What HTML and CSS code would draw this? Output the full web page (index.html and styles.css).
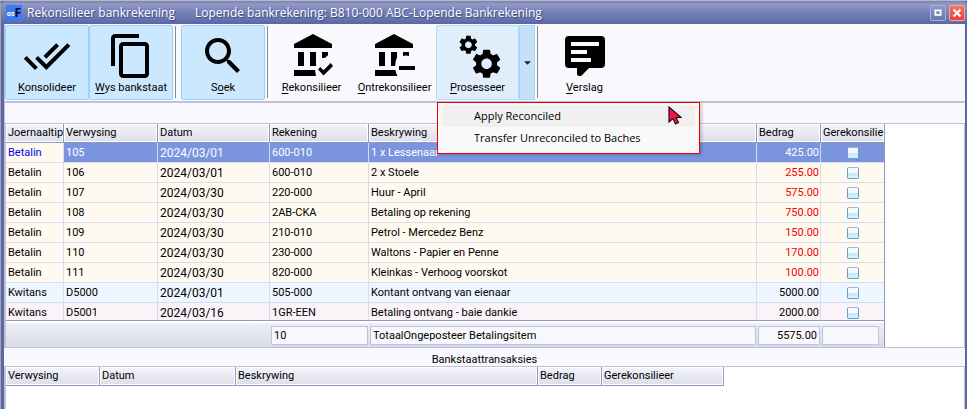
FILE: index.html
```html
<!DOCTYPE html>
<html lang="af">
<head>
<meta charset="utf-8">
<title>Rekonsilieer bankrekening</title>
<link rel="stylesheet" href="styles.css">
</head>
<body>
<main class="window">
  <header class="titlebar">
    <span class="logo"><span class="logo-os">os</span>F</span>
    <h1 class="title">Rekonsilieer bankrekening</h1>
    <span class="subtitle">Lopende bankrekening: B810-000 ABC-Lopende Bankrekening</span>
    <button class="winbtn" type="button" aria-label="Maksimeer"><svg viewBox="0 0 16 16"><path d="M5 5h6v5H5z" fill="none" stroke="#fff" stroke-width="2"/></svg></button>
    <button class="winbtn winbtn-close" type="button" aria-label="Sluit"><svg viewBox="0 0 16 16"><path d="M4 4l8 8M12 4l-8 8" stroke="#fff" stroke-width="2.6"/></svg></button>
  </header>

  <nav class="toolbar">
    <button class="tool tool-on" type="button">
      <svg viewBox="0 0 24 24"><path d="M18 7l-1.41-1.41-6.34 6.34 1.41 1.41L18 7zm4.24-1.41L11.66 16.17 7.48 12l-1.41 1.41L11.66 19l12-12-1.42-1.41zM.41 13.41L6 19l1.41-1.41L1.83 12 .41 13.41z"/></svg>
      <span><u>K</u>onsolideer</span>
    </button>
    <button class="tool tool-on" type="button">
      <svg viewBox="0 0 24 24"><path d="M16 1H4c-1.100 0-2 .9-2 2v14h2V3h12V1zm3 4H8c-1.100 0-2 .9-2 2v14c0 1.100.9 2 2 2h11c1.100 0 2-.9 2-2V7c0-1.100-.9-2-2-2zm0 16H8V7h11v14z"/></svg>
      <span><u>W</u>ys bankstaat</span>
    </button>
    <span class="sep"></span>
    <button class="tool tool-on" type="button">
      <svg viewBox="0 0 24 24"><path d="M15.500 14h-.79l-.28-.27C15.410 12.590 16 11.110 16 9.500 16 5.910 13.090 3 9.500 3S3 5.910 3 9.500 5.910 16 9.500 16c1.610 0 3.090-.59 4.230-1.570l.27.28v.79l5 4.990L20.490 19l-4.990-5zm-6 0C7.010 14 5 11.990 5 9.500S7.010 5 9.500 5 14 7.010 14 9.500 11.990 14 9.500 14z"/></svg>
      <span>S<u>o</u>ek</span>
    </button>
    <span class="sep sep-tight"></span>
    <button class="tool" type="button">
      <svg viewBox="0 0 24 24"><path d="M12.500 1L3 6v2h19V6zM5 10h3v7H5zM11 10h3v7h-3zM17 10h3v1.600l-1.600 1.400H17zM3 19h10.500l.5 3H3zM17.750 21.700L15 18.700l1.160-1.160 1.590 1.590 3.590-3.590 1.160 1.410z"/></svg>
      <span><u>R</u>ekonsilieer</span>
    </button>
    <button class="tool" type="button">
      <svg viewBox="0 0 24 24"><path d="M11.500 1L2 6v2h19V6zM4 10h3v7H4zM10 10h3v2.800q-1 1.800-.9 4.200H10zM16 10h3v2q-1.500-.4-3 0zM2 19h10.200q.3 1.600 1 3H2zM14 17h8v2h-8z"/></svg>
      <span><u>O</u>ntrekonsilieer</span>
    </button>
    <div class="split">
      <button class="tool tool-hot" type="button">
        <svg viewBox="0 0 24 24">
          <defs><path id="cog" d="M7.140.94c.04-.3.060-.61.060-.94 0-.32-.02-.64-.07-.94l2.030-1.580c.18-.14.230-.41.120-.61l-1.920-3.320c-.12-.22-.37-.29-.59-.22l-2.390.960c-.5-.38-1.030-.7-1.620-.94l-.36-2.540c-.04-.24-.24-.41-.48-.41h-3.840c-.24 0-.43.170-.47.410l-.36 2.540c-.59.240-1.130.570-1.620.940l-2.390-.96c-.22-.08-.47 0-.59.220l-1.910 3.320c-.12.210-.08.470.120.610l2.030 1.580c-.05.300-.09.630-.09.940s.02.640.070.940l-2.030 1.580c-.18.140-.23.410-.12.610l1.920 3.320c.12.220.370.290.590.220l2.390-.96c.5.380 1.030.700 1.620.940l.36 2.540c.05.240.240.410.480.410h3.840c.24 0 .44-.17.470-.41l.36-2.540c.59-.24 1.130-.56 1.620-.94l2.390.960c.22.080.470 0 .59-.22l1.920-3.320c.12-.22.070-.47-.12-.61zM0 3.600C-1.980 3.600-3.600 1.980-3.600 0S-1.980-3.600 0-3.600 3.600-1.980 3.600 0 1.980 3.600 0 3.600z"/></defs>
          <use href="#cog" transform="translate(7.200 6.400) scale(.47)"/>
          <use href="#cog" transform="translate(16.300 15.900) scale(.73)"/>
        </svg>
        <span><u>P</u>rosesseer</span>
      </button>
      <button class="tool-arrow" type="button" aria-label="Prosesseer opsies"><svg viewBox="0 0 8 4"><path d="M0 0h8L4 4z" fill="#222"/></svg></button>
      <div class="menu" role="menu">
        <button class="menu-item menu-item-hot" type="button" role="menuitem">Apply Reconciled</button>
        <button class="menu-item" type="button" role="menuitem">Transfer Unreconciled to Baches</button>
        <svg class="cursor" viewBox="0 0 14 20"><path d="M1 1v15l4-3.500 2.500 5.500 3-1.500L8 11.500h5z" fill="#ff0f46" stroke="#1a1018" stroke-width="1.200"/></svg>
      </div>
    </div>
    <span class="sep"></span>
    <button class="tool" type="button">
      <svg viewBox="0 0 24 24"><path fill-rule="evenodd" d="M4 2h16q2 0 2 2v12q0 2-2 2h-6l-3.700 3.700Q10 22 9 22q-1 0-1-1v-3H4q-2 0-2-2V4q0-2 2-2zM5 5v2h14V5zM5 9v2h8V9zM5 13v2h10v-2z"/></svg>
      <span><u>V</u>erslag</span>
    </button>
  </nav>

  <div class="strip"></div>

  <section class="grid-area">
    <div class="grid-box">
      <div class="rows">
        <table class="grid">
          <colgroup><col class="c-type"><col class="c-ref"><col class="c-date"><col class="c-acc"><col class="c-desc"><col class="c-amt"><col class="c-amt"></colgroup>
          <thead><tr><th>Joernaaltipe</th><th>Verwysing</th><th>Datum</th><th>Rekening</th><th>Beskrywing</th><th>Bedrag</th><th>Gerekonsilie</th></tr></thead>
          <tbody>
            <tr class="selected"><td>Betalin</td><td>105</td><td class="date">2024/03/01</td><td>600-010</td><td>1 x Lessenaar</td><td class="num">425.00</td><td class="tick"><input type="checkbox" aria-label="Gerekonsilieer 105"></td></tr>
            <tr><td>Betalin</td><td>106</td><td class="date">2024/03/01</td><td>600-010</td><td>2 x Stoele</td><td class="num">255.00</td><td class="tick"><input type="checkbox" aria-label="Gerekonsilieer 106"></td></tr>
            <tr><td>Betalin</td><td>107</td><td class="date">2024/03/30</td><td>220-000</td><td>Huur - April</td><td class="num">575.00</td><td class="tick"><input type="checkbox" aria-label="Gerekonsilieer 107"></td></tr>
            <tr><td>Betalin</td><td>108</td><td class="date">2024/03/30</td><td>2AB-CKA</td><td>Betaling op rekening</td><td class="num">750.00</td><td class="tick"><input type="checkbox" aria-label="Gerekonsilieer 108"></td></tr>
            <tr><td>Betalin</td><td>109</td><td class="date">2024/03/30</td><td>210-010</td><td>Petrol - Mercedez Benz</td><td class="num">150.00</td><td class="tick"><input type="checkbox" aria-label="Gerekonsilieer 109"></td></tr>
            <tr><td>Betalin</td><td>110</td><td class="date">2024/03/30</td><td>230-000</td><td>Waltons - Papier en Penne</td><td class="num">170.00</td><td class="tick"><input type="checkbox" aria-label="Gerekonsilieer 110"></td></tr>
            <tr><td>Betalin</td><td>111</td><td class="date">2024/03/30</td><td>820-000</td><td>Kleinkas - Verhoog voorskot</td><td class="num">100.00</td><td class="tick"><input type="checkbox" aria-label="Gerekonsilieer 111"></td></tr>
            <tr class="receipt"><td>Kwitans</td><td>D5000</td><td class="date">2024/03/01</td><td>505-000</td><td>Kontant ontvang van eienaar</td><td class="num">5000.00</td><td class="tick"><input type="checkbox" aria-label="Gerekonsilieer D5000"></td></tr>
            <tr class="receipt receipt-alt"><td>Kwitans</td><td>D5001</td><td class="date">2024/03/16</td><td>1GR-EEN</td><td>Betaling ontvang - baie dankie</td><td class="num">2000.00</td><td class="tick"><input type="checkbox" aria-label="Gerekonsilieer D5001"></td></tr>
          </tbody>
        </table>
      </div>
      <div class="totals">
        <output>10</output>
        <output>TotaalOngeposteer Betalingsitem</output>
        <output class="num">5575.00</output>
        <output></output>
      </div>
    </div>
  </section>

  <h2 class="caption">Bankstaattransaksies</h2>

  <section class="statement">
    <table class="grid">
      <colgroup><col class="s-ref"><col class="s-date"><col class="s-desc"><col class="s-amt"><col class="s-rec"></colgroup>
      <thead><tr><th>Verwysing</th><th>Datum</th><th>Beskrywing</th><th>Bedrag</th><th>Gerekonsilieer</th></tr></thead>
    </table>
  </section>
</main>
</body>
</html>
```
FILE: styles.css
```css
* { box-sizing: border-box; }

body {
  margin: 0;
  background: #b9b8bc;
  color: #000;
  font: 11px/16px Roboto, sans-serif;
}

button { font: inherit; color: inherit; margin: 0; padding: 0; border: 0; background: none; }

.window {
  display: flex;
  flex-direction: column;
  min-height: 100vh;
  border-top: 1px solid #b9b8bc;
  border-left: 1px solid #a3a5b4;
  background: #5c68a6;
  padding: 0 2px 0 3px;
}

/* Title bar */
.titlebar {
  display: flex;
  align-items: center;
  height: 23px;
  margin: 0 -2px 0 -3px;
  padding: 0 2px 0 5px;
  border-radius: 5px 5px 0 0;
  background: linear-gradient(#7882b5 0, #9099c6 3px, #7b86b9 40%, #6470aa 85%, #5a66a2 100%);
  color: #fff;
  font: 12px/16px "Open Sans", "Noto Sans", sans-serif;
  text-shadow: 1px 1px 1px #3d4780;
}

.logo {
  width: 16px;
  height: 16px;
  margin-right: 5px;
  background: #3b7cf0;
  color: #06062c;
  font: bold 12px/16px "Open Sans", sans-serif;
  text-align: center;
  text-shadow: none;
}

.logo-os { color: #fff; font-size: 7px; vertical-align: 1px; }

.title { width: 168px; margin: 0; font: inherit; }
.subtitle { flex: 1; white-space: nowrap; }

.winbtn {
  width: 16px;
  height: 16px;
  margin-left: 3px;
  border: 1px solid #a9b0d3;
  border-radius: 2px;
  background: linear-gradient(#8f97c4, #6b76ad);
}

.winbtn-close { border-color: #f7a9a4; background: linear-gradient(#f2736c, #f23c34); }
.winbtn svg { display: block; width: 14px; height: 14px; }

/* Toolbar */
.toolbar {
  display: flex;
  height: 79px;
  padding: 1px 0 2px;
  border-left: 1px solid #bcc1dc;
  border-bottom: 2px solid #bcc1dc;
  background: #f9f9fd;
}

.tool {
  display: flex;
  flex-direction: column;
  align-items: center;
  width: 83px;
  height: 75px;
  padding-top: 6px;
  border: 1px solid transparent;
  border-radius: 2px;
  line-height: 16px;
  white-space: nowrap;
}

.tool svg { width: 48px; height: 48px; }
.tool u { text-underline-offset: 2px; }
.tool-on { width: 84px; background: #cce8ff; border-color: #99d1ff; }
.tool-hot { background: #e0eefb; border-color: #b5dcfa; }

.sep { width: 1px; height: 72px; margin: 1px 5px 0 2px; background: #8c8c8c; }
.sep-tight { margin-right: 2px; }

.split { position: relative; display: flex; }

.tool-arrow {
  display: flex;
  align-items: center;
  justify-content: center;
  width: 16px;
  height: 75px;
  border: 1px solid #a5d5fb;
  background: #c5e0f9;
}

.tool-arrow svg { width: 7px; height: 4px; }

.menu {
  position: absolute;
  z-index: 2;
  top: 77px;
  left: 1px;
  width: 263px;
  padding: 2px 4px 4px;
  border: 1px solid #f00000;
  background: #f9f9f9;
  box-shadow: 2px 1px 3px rgba(0, 0, 0, .2);
  font: 11px/22px "Open Sans", "Noto Sans", sans-serif;
}

.menu-item { display: block; width: 100%; height: 22px; padding-left: 32px; border-radius: 3px; text-align: left; }
.menu-item-hot { background: #f0f0f0; }

.cursor { position: absolute; top: 3px; right: 17px; width: 14px; height: 20px; }

/* Main grid */
.strip { height: 20px; border-left: 1px solid #bcc1dc; background: #f9f9fd; }

.grid-area { overflow: hidden; border: 1px solid #bcc1dc; border-left-width: 2px; background: #fff; }
.grid-box { width: 879px; border-right: 1px solid #8f98c4; }
.rows { height: 197px; overflow: hidden; border-bottom: 1px solid #8f98c4; }

.grid { table-layout: fixed; border-collapse: separate; border-spacing: 0; width: 0; }

.c-type { width: 58px; }
.c-ref { width: 94px; }
.c-date { width: 112px; }
.c-acc { width: 99px; }
.c-desc { width: 388px; }
.c-amt { width: 64px; }
.s-ref { width: 94px; }
.s-date { width: 136px; }
.s-desc { width: 302px; }
.s-amt { width: 64px; }
.s-rec { width: 122px; }

.grid th {
  height: 19px;
  padding: 0 0 0 2px;
  overflow: hidden;
  border-right: 1px solid #8f98c4;
  border-bottom: 1px solid #8f98c4;
  background: linear-gradient(#f4f4f9, #dcdee9);
  box-shadow: inset 1px 1px #fff, inset -1px -1px #fff;
  font-weight: normal;
  text-align: left;
  white-space: nowrap;
}

.grid td {
  height: 20px;
  padding: 1px 2px 0;
  overflow: hidden;
  border-right: 1px solid #d9dbf3;
  border-bottom: 1px solid #d9dbf3;
  background: #fffaf0;
  white-space: nowrap;
}

.grid .date { font-size: 12px; }
.grid .num { padding-right: 1px; color: #f00000; text-align: right; }
.grid .tick { padding: 0; text-align: center; }
.grid .selected td { background: #7a94de; color: #fff; }
.grid .selected td:first-child { background: #fffaf0; color: #0000f0; }
.grid .receipt td { background: #eef6ff; color: #000; }
.grid .receipt-alt td { background: #faf4f8; }

.tick input {
  display: block;
  appearance: none;
  width: 12px;
  height: 12px;
  margin: 0 auto;
  border: 1px solid #5f9fce;
  border-top-color: #a5b8c8;
  border-radius: 2px;
  background: linear-gradient(#f2fafe 0 50%, #c2e6fa 50%, #dcf3fe);
}

.totals {
  display: grid;
  grid-template-columns: 97px 1fr 62px 57px;
  gap: 2px;
  height: 26px;
  padding: 3px 5px 2px 265px;
  border-top: 2px solid #fff;
  background: linear-gradient(#eeeff5, #d8dbe9);
}

.totals output { padding: 0 2px; border: 1px solid #bcc1dc; background: #f8f8fc; line-height: 17px; }
.totals .num { text-align: right; }

/* Bank statement */
.caption { margin: 0; padding: 3px 0 0; height: 18px; background: #f9f9fd; font: inherit; line-height: 17px; text-align: center; }
.statement { flex: 1; border: solid #bcc1dc; border-width: 1px 1px 0 2px; background: #fff; }
```
